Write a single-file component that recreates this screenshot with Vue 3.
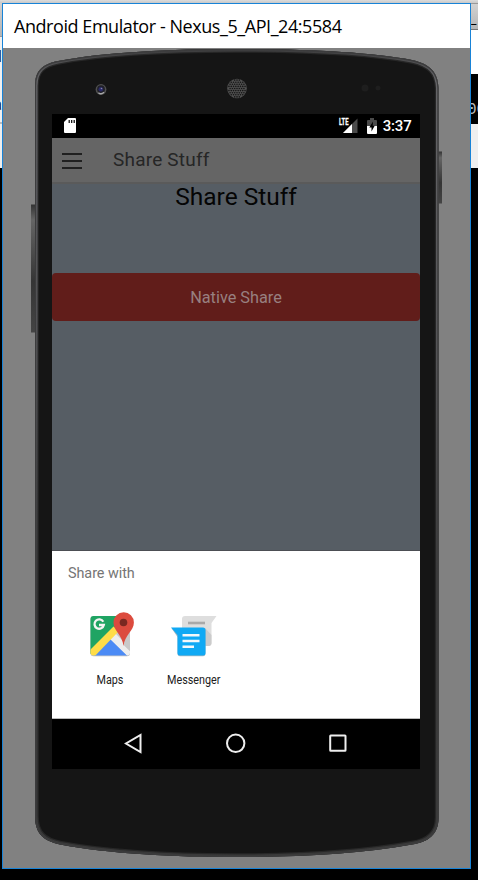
<script setup>
const holes = []
for (let r = 0; r < 9; r++) {
  for (let c = 0; c < 9; c++) {
    const x = 237 + (c - 4) * 2.3 + (r % 2 ? 1.15 : 0)
    const y = 88.5 + (r - 4) * 2.1
    if (Math.hypot(x - 237, y - 88.5) < 8.8) holes.push({ x, y })
  }
}
const shell =
  'M35 86C35 70 43 64 58 61C105 52 170 49 237 49C305 49 370 52 412 60C430 64 438 72 438.500 88L438.500 818C438.500 834 429 842 412 844.500C360 854 300 857 237 857C174 857 110 854 60 844.500C44 841 35 834 35 816Z'
</script>

<template>
  <main class="desktop">
    <div class="behind left">
      <span class="tab"></span>
      <span class="page"><i>l</i><i>a</i></span>
    </div>
    <section class="window">
      <header class="titlebar">Android Emulator - Nexus_5_API_24:5584</header>
      <div class="stage">
        <svg class="body" width="467" height="820" viewBox="3 48 467 820">
          <defs>
            <linearGradient id="key" x1="0" y1="0" x2="0" y2="1">
              <stop offset="0" stop-color="#333" /><stop offset=".12" stop-color="#656565" />
              <stop offset=".6" stop-color="#353535" /><stop offset="1" stop-color="#444" />
            </linearGradient>
            <linearGradient id="rim" x1="0" y1="0" x2="0" y2="1">
              <stop offset="0" stop-color="#3c3c3d" /><stop offset=".04" stop-color="#656568" />
              <stop offset=".4" stop-color="#535356" /><stop offset=".65" stop-color="#3a3a3b" />
              <stop offset="1" stop-color="#393939" />
            </linearGradient>
            <clipPath id="case"><path :d="shell" /></clipPath>
          </defs>
          <rect x="31" y="204.500" width="5" height="128" fill="url(#key)" />
          <rect x="437" y="151.500" width="5" height="52" fill="url(#key)" />
          <g clip-path="url(#case)">
            <path :d="shell" fill="#151515" />
            <path :d="shell" fill="none" stroke="#272727" stroke-width="7.500" />
            <path :d="shell" fill="none" stroke="url(#rim)" stroke-width="5" />
            <path :d="shell" fill="none" stroke="#3c3c3d" stroke-width="2.400" />
          </g>
          <circle cx="101" cy="89.500" r="5.400" fill="#505050" />
          <circle cx="101" cy="89.200" r="3.900" fill="#202028" />
          <circle cx="100.800" cy="89.300" r="2.300" fill="#292968" />
          <circle cx="101.500" cy="88.500" r=".8" fill="#8585a5" />
          <path d="M98.500 92.700Q101 95 104 92.300" fill="none" stroke="#a8a8a8" stroke-width="1.300" />
          <circle cx="237" cy="88.500" r="9.800" fill="#505050" />
          <circle v-for="(h, i) in holes" :key="i" :cx="h.x" :cy="h.y" r=".8" fill="#151515" />
          <circle cx="365" cy="88" r="3.500" fill="#1e1e1e" />
          <circle cx="378" cy="88" r="2.500" fill="#1e1e1e" />
        </svg>

        <div class="screen">
          <div class="status">
            <svg class="sd" width="12" height="15" viewBox="0 0 12 15">
              <path d="M4 0H11Q12 0 12 1V14Q12 15 11 15H1Q0 15 0 14V4Z" fill="#fff" />
              <path d="M5.200 2V5M7.700 2V5M10.200 2V5" stroke="#000" stroke-width="1.200" />
            </svg>
            <span class="network">
              <b>LTE</b>
              <svg width="19" height="16" viewBox="0 0 19 16">
                <path d="M18.500 .5V15H4Z" fill="#4b4b4b" />
                <path d="M13 6V15H4Z" fill="#fff" />
              </svg>
            </span>
            <svg class="battery" width="10" height="16" viewBox="0 0 10 16">
              <path d="M3 0H7V2H9Q10 2 10 3V8H0V3Q0 2 1 2H3Z" fill="#4b4b4b" />
              <path d="M0 8H10V15Q10 16 9 16H1Q0 16 0 15Z" fill="#fff" />
              <path d="M6 3.500L2.300 9.500H4.500V13.500L7.700 7.800H5.700Z" fill="#000" />
            </svg>
            <time>3:37</time>
          </div>
          <div class="appbar">
            <span class="menu"><i></i><i></i><i></i></span>
            <span class="apptitle">Share Stuff</span>
          </div>
          <div class="content">
            <h1><span>Share Stuff</span></h1>
            <button>Native Share</button>
          </div>
          <div class="sheet">
            <h2><span>Share with</span></h2>
            <div class="targets">
              <div class="target">
                <svg width="48" height="48" viewBox="0 0 48 48">
                  <defs>
                    <clipPath id="tile"><rect x="4.500" y="5" width="39.500" height="39.500" rx="3" /></clipPath>
                  </defs>
                  <rect x="4.500" y="5.800" width="39.500" height="39.500" rx="3" fill="#b9b9b9" />
                  <g clip-path="url(#tile)">
                    <rect x="4" y="5" width="40" height="40" fill="#d2d2d2" />
                    <path d="M4 5H36L31 17L4 44Z" fill="#1fa463" />
                    <path d="M6 46L24.500 27.500L43 46Z" fill="#4c8bf5" />
                    <path d="M28 20L37.500 34L46 43V5H36Z" fill="#c9c9c9" />
                    <path d="M28 21L37 30L37.500 34L47 43V48H44.500L24 28Z" fill="#eeeeee" />
                    <path d="M1 42L27.500 15.500L33 20L7 47Z" fill="#ffdd48" />
                  </g>
                  <path d="M17.300 10.700A4.700 4.700 0 1 0 17.800 14H13" fill="none" stroke="#f4f4f4" stroke-width="2.300" />
                  <path d="M37.500 35C36.500 24 27.500 20 27.500 11.500A10.200 10.200 0 0 1 47.900 11.500C47.900 20 38.500 24 37.500 35Z" fill="#dc4b3e" />
                  <circle cx="37.500" cy="11.500" r="3.800" fill="#7a2821" />
                </svg>
                <span>Maps</span>
              </div>
              <div class="target">
                <svg width="48" height="48" viewBox="0 0 48 48">
                  <path d="M14 5H46.500L41.500 12V32Q41.500 35 38.500 35H14Q12 35 12 33V8Q12 5 15 5Z" fill="#dedede" />
                  <path d="M18 12H35" stroke="#a9a9a9" stroke-width="2.600" />
                  <path d="M35 17L41.500 24V32Q41.500 35 38.500 35H35Z" fill="#cbcbcb" />
                  <path d="M1.500 17.300H33Q35.500 17.300 35.500 19V42Q35.500 45.300 33 45.300H10Q7.500 45.300 7.500 42V26Z" fill="#a7b8c1" />
                  <path d="M1 16.500H33Q35.500 16.500 35.500 19V42Q35.500 44.500 33 44.500H10Q7.500 44.500 7.500 42V24Z" fill="#10a9f4" />
                  <path d="M12.500 24.300H29.500M12.500 30H29.500M12.500 35.700H24" stroke="#f4f8fa" stroke-width="2.500" />
                </svg>
                <span>Messenger</span>
              </div>
            </div>
          </div>
          <nav class="navbar">
            <svg width="20" height="22" viewBox="0 0 20 22"><path d="M16.500 2V19L2 10.500Z" /></svg>
            <svg width="22" height="22" viewBox="0 0 22 22"><circle cx="10.700" cy="10.300" r="8.700" /></svg>
            <svg width="20" height="22" viewBox="0 0 20 22"><rect x="2.200" y="2.500" width="15.300" height="15.300" rx=".5" /></svg>
          </nav>
        </div>
      </div>
    </section>
    <div class="behind right">
      <span class="bar">_</span><span class="white"></span><span class="console">00</span><span class="pale"></span>
    </div>
  </main>
</template>

<style>
body { margin: 0; background: #000; }
</style>

<style scoped>
* { box-sizing: border-box; }
.desktop {
  width: 478px; height: 880px; overflow: hidden; display: grid;
  grid-template-columns: 2px 469px 7px; background: linear-gradient(#dcdcdc, #c8c8c8 3px, #000 3px);
  font-family: Roboto, sans-serif;
}
.behind { display: flex; flex-direction: column; overflow: hidden; padding-top: 3px; }
.left .tab { height: 33px; background: linear-gradient(#d0d0d0, #b4b4b4); }
.left .page { height: 132px; background: linear-gradient(#999 1px, #f0f0f0 1px 86px, #bbb 86px 88px, #eee 88px); font-size: 16px; line-height: 18px; padding-top: 12px; display: flex; flex-direction: column; gap: 30px; }
.left i { font-style: normal; direction: rtl; color: #222; }
.right span { flex: none; overflow: hidden; }
.right .bar { height: 27px; background: linear-gradient(#999 1px, #d2d2d2 1px, #b5b5b5 26px, #777 26px); font-size: 12px; line-height: 34px; }
.right .white { height: 44px; background: #fff; }
.right .console { height: 50px; background: #000; color: #bbb; font: 16px/72px "Liberation Mono", monospace; text-indent: -4px; }
.right .pale { height: 44px; background: #efefef; }
.window { margin-top: 3px; height: 866px; border: 1px solid #1883d7; background: #818181; }
.titlebar {
  height: 44px; padding-left: 11px; background: #fff; color: #000;
  font: 18px/45px "Open Sans", sans-serif; letter-spacing: -0.44px; white-space: nowrap;
}
.stage { position: relative; height: 820px; padding: 66px 0 0 49px; }
.body { position: absolute; inset: 0; display: block; }
.screen { position: relative; width: 368px; height: 655px; display: flex; flex-direction: column; background: #000; }
.status { height: 24px; flex: none; display: flex; align-items: center; padding: 0 8.500px 0 12px; color: #fff; }
.sd { margin-bottom: 1px; }
.network { margin-left: auto; display: flex; align-items: flex-start; height: 16px; }
.network b { font: 700 9.500px/8px Roboto, sans-serif; width: 10px; transform: scaleX(.62); transform-origin: left; -webkit-text-stroke: .3px #fff; }
.network svg { margin-left: -10px; position: relative; }
.battery { margin-left: 9px; }
time { font-size: 15px; font-weight: 500; line-height: 26px; margin-left: 7px; letter-spacing: -.2px; }
.network, .battery { transform: translateX(1px); }
.appbar { height: 46px; flex: none; display: flex; align-items: center; padding: 1px 10px 0; background: #656565; border-bottom: 2px solid #5a5a5a; }
.menu { width: 20px; display: grid; gap: 5px; margin-right: 31px; padding-top: 1px; }
.menu i { height: 2px; background: #202020; }
.apptitle { font-size: 19px; line-height: 22px; color: #262626; letter-spacing: .2px; padding-bottom: 1px; }
.content { height: 367px; flex: none; background: #565d64; border-bottom: 1px solid #4c4e54; }
h1 { margin: 0; height: 89px; font-size: 24.500px; line-height: 26px; font-weight: 400; text-align: center; color: #050505; }
button { display: block; width: 100%; height: 48px; border: 0; border-radius: 4px; background: #611d1a; color: #988080; font: 16.300px Roboto, sans-serif; }
.sheet { height: 168px; flex: none; background: #fff; border-bottom: 1px solid #bbb; }
h2 { margin: 0; height: 60px; padding-left: 16px; font-size: 14.400px; line-height: 46px; font-weight: 400; color: #757575; letter-spacing: -.05px; }
.targets { display: flex; padding-left: 16px; }
.target { width: 84px; display: flex; flex-direction: column; align-items: center; gap: 12px; }
.target span { font-size: 12px; line-height: 18px; color: #212121; transform: scaleX(.9); }
.navbar { height: 50px; display: flex; justify-content: space-between; align-items: center; padding: 0 72px; }
.navbar svg { fill: none; stroke: #eee; stroke-width: 2; }
</style>
